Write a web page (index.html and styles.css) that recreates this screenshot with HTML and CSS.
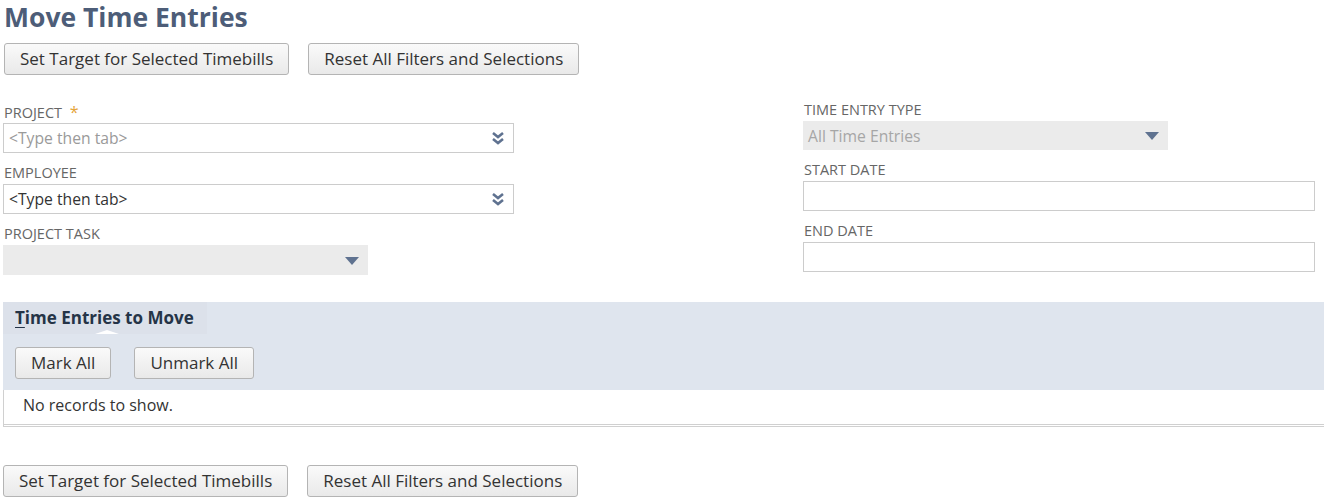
FILE: index.html
```html
<!DOCTYPE html>
<html>
<head>
<meta charset="utf-8">
<link rel="stylesheet" href="styles.css">
</head>
<body>
<div class="page">
  <h1 class="title">Move Time Entries</h1>
  <div class="btn-row top-row">
    <button class="btn">Set Target for Selected Timebills</button>
    <button class="btn">Reset All Filters and Selections</button>
  </div>

  <div class="form">
    <div class="col col-left">
      <div class="field">
        <div class="label">PROJECT <span class="req">*</span></div>
        <div class="input combo">
          <span class="placeholder">&lt;Type then tab&gt;</span>
          <svg class="dbl" width="14" height="14" viewBox="0 0 14 14"><path d="M2 2 L7 6 L12 2" fill="none" stroke="#5f7290" stroke-width="2.6"/><path d="M2 8 L7 12 L12 8" fill="none" stroke="#5f7290" stroke-width="2.6"/></svg>
        </div>
      </div>
      <div class="field">
        <div class="label">EMPLOYEE</div>
        <div class="input combo">
          <span class="value">&lt;Type then tab&gt;</span>
          <svg class="dbl" width="14" height="14" viewBox="0 0 14 14"><path d="M2 2 L7 6 L12 2" fill="none" stroke="#5f7290" stroke-width="2.6"/><path d="M2 8 L7 12 L12 8" fill="none" stroke="#5f7290" stroke-width="2.6"/></svg>
        </div>
      </div>
      <div class="field">
        <div class="label">PROJECT TASK</div>
        <div class="select task">
          <span class="disabled-text"></span>
          <svg class="tri" width="14" height="8" viewBox="0 0 14 8"><path d="M0 0 H14 L7 8 Z" fill="#5f7290"/></svg>
        </div>
      </div>
    </div>
    <div class="col col-right">
      <div class="field type-field">
        <div class="label">TIME ENTRY TYPE</div>
        <div class="select type">
          <span class="disabled-text">All Time Entries</span>
          <svg class="tri" width="14" height="8" viewBox="0 0 14 8"><path d="M0 0 H14 L7 8 Z" fill="#5f7290"/></svg>
        </div>
      </div>
      <div class="field">
        <div class="label">START DATE</div>
        <div class="input"></div>
      </div>
      <div class="field">
        <div class="label">END DATE</div>
        <div class="input"></div>
      </div>
    </div>
  </div>

  <div class="section">
    <div class="section-head">
      <div class="tab"><span class="ul">T</span>ime Entries to Move</div>
    </div>
    <div class="btn-row sub-row">
      <button class="btn">Mark All</button>
      <button class="btn">Unmark All</button>
    </div>
    <div class="records">No records to show.</div>
  </div>

  <div class="btn-row bottom-row">
    <button class="btn">Set Target for Selected Timebills</button>
    <button class="btn">Reset All Filters and Selections</button>
  </div>
</div>
</body>
</html>
```

FILE: styles.css
```css
* { box-sizing: border-box; }
html, body {
  margin: 0;
  padding: 0;
  background: #ffffff;
  font-family: "Open Sans", "Liberation Sans", sans-serif;
  color: #333333;
}
.page {
  padding: 0 0 0 3px;
  width: 1324px;
}
.title {
  margin: 0;
  padding: 0 0 0 1px;
  height: 43px;
  font-size: 26.5px;
  line-height: 34px;
  font-weight: 700;
  color: #4d5d78;
}
.btn-row {
  display: flex;
  gap: 19px;
}
.top-row { padding-left: 1px; }
.btn {
  font-family: "Open Sans", "Liberation Sans", sans-serif;
  font-size: 17px;
  color: #333333;
  height: 32px;
  padding: 0 15px;
  border: 1px solid #b4b4b4;
  border-radius: 3px;
  background: linear-gradient(#fafafa, #e9e9e9);
  line-height: 30px;
  cursor: pointer;
}
.form {
  display: grid;
  grid-template-columns: 511px 512px;
  column-gap: 289px;
  margin-top: 28px;
}
.col { display: flex; flex-direction: column; }
.col-right { margin-top: -2px; }
.field { margin-bottom: 11px; }
.type-field { margin-bottom: 11px; }
.label {
  font-size: 14.5px;
  line-height: 18px;
  color: #666666;
  height: 20px;
  padding-left: 1px;
}
.req { color: #e5a43a; margin-left: 4px; font-size: 16px; }
.input {
  height: 30px;
  border: 1px solid #cccccc;
  background: #ffffff;
  display: flex;
  align-items: center;
  padding: 0 7px 0 5px;
  font-size: 15.7px;
}
.combo { justify-content: space-between; }
.placeholder { color: #9a9a9a; }
.value { color: #333333; }
.dbl { margin-right: 1px; }
.select {
  height: 30px;
  background: #ebebeb;
  display: flex;
  align-items: center;
  justify-content: space-between;
  padding: 0 9px 0 5px;
  font-size: 15.7px;
}
.select.task { width: 365px; }
.select.type { width: 365px; height: 29px; }
.disabled-text { color: #a6a6a6; }
.tri { margin-top: 1px; }

.section {
  margin-top: 16px;
  background: #dfe5ee;
  width: 1321px;
}
.section-head { height: 32px; }
.tab {
  position: relative;
  width: 204px;
  height: 32px;
  background: #dce1ea;
  font-weight: 700;
  font-size: 17px;
  line-height: 32px;
  padding-left: 12px;
  color: #253447;
}
.tab::after {
  content: "";
  position: absolute;
  left: 92px;
  bottom: 0;
  border-left: 12px solid transparent;
  border-right: 12px solid transparent;
  border-bottom: 4px solid #ffffff;
}
.ul { text-decoration: underline; text-underline-offset: 3px; }
.sub-row {
  padding: 13px 0 11px 12px;
  gap: 23px;
}
.sub-row .btn { padding: 0 15px; }
.records {
  background: #ffffff;
  border-left: 1px solid #d0d0d0;
  border-bottom: 3px double #d0d0d0;
  height: 37px;
  line-height: 31px;
  padding-left: 19px;
  font-size: 16px;
  color: #333333;
}
.bottom-row { margin-top: 38px; }
```
